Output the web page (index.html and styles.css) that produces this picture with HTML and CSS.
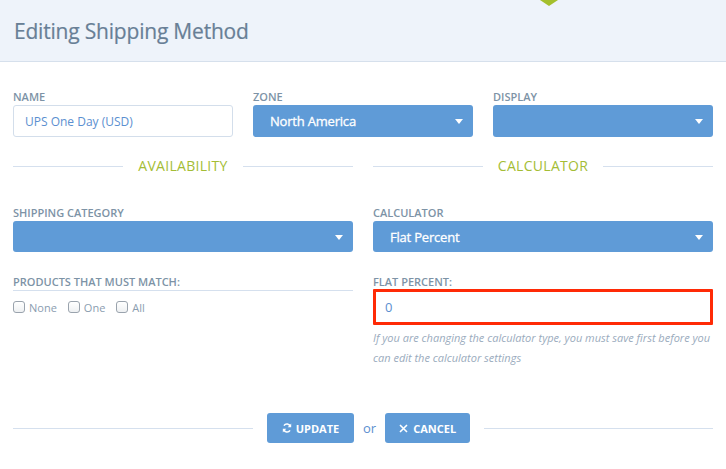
FILE: index.html
```html
<!DOCTYPE html>
<html>
<head>
<meta charset="utf-8">
<link rel="stylesheet" href="styles.css">
</head>
<body>
<div class="page">
  <header class="header">
    <span class="tab-pointer"></span>
    <h1 class="title">Editing Shipping Method</h1>
  </header>
  <main class="content">
    <div class="row3">
      <div class="field">
        <label class="label">Name</label>
        <div class="input">UPS One Day (USD)</div>
      </div>
      <div class="field">
        <label class="label">Zone</label>
        <div class="select">North America<span class="caret"></span></div>
      </div>
      <div class="field">
        <label class="label">Display</label>
        <div class="select"><span class="caret"></span></div>
      </div>
    </div>

    <div class="row2">
      <div class="col">
        <div class="section-title"><span class="rule"></span><span class="section-text">AVAILABILITY</span><span class="rule"></span></div>
        <div class="field mt">
          <label class="label">Shipping Category</label>
          <div class="select sm"><span class="caret"></span></div>
        </div>
        <div class="field mt2">
          <label class="label underlined">Products That Must Match:</label>
          <div class="checks">
            <span class="check"><span class="box"></span>None</span>
            <span class="check"><span class="box"></span>One</span>
            <span class="check"><span class="box"></span>All</span>
          </div>
        </div>
      </div>
      <div class="col">
        <div class="section-title"><span class="rule"></span><span class="section-text">CALCULATOR</span><span class="rule"></span></div>
        <div class="field mt">
          <label class="label">Calculator</label>
          <div class="select sm">Flat Percent<span class="caret"></span></div>
        </div>
        <div class="field mt2">
          <label class="label">Flat Percent:</label>
          <div class="input highlighted">0</div>
          <p class="help">If you are changing the calculator type, you must save first before you can edit the calculator settings</p>
        </div>
      </div>
    </div>

    <div class="actions">
      <span class="line left"></span>
      <button class="btn update">
        <svg class="ico" width="10" height="10" viewBox="0 0 10 10"><path d="M8.3 3.6A3.5 3.5 0 0 0 2 2.6" fill="none" stroke="#fff" stroke-width="1.6"/><path d="M9.2 0.6V4.2H5.7z" fill="#fff"/><path d="M1.7 6.4A3.5 3.5 0 0 0 8 7.4" fill="none" stroke="#fff" stroke-width="1.6"/><path d="M0.8 9.4V5.8H4.3z" fill="#fff"/></svg>
        UPDATE
      </button>
      <span class="or">or</span>
      <button class="btn cancel">
        <svg class="ico" width="9" height="9" viewBox="0 0 9 9"><path d="M1 1L8 8M8 1L1 8" stroke="#fff" stroke-width="1.6"/></svg>
        CANCEL
      </button>
      <span class="line right"></span>
    </div>
  </main>
</div>
</body>
</html>
```
FILE: styles.css
```css
* { box-sizing: border-box; }
html, body { margin: 0; padding: 0; background: #fff; }
body { font-family: "Open Sans", "Liberation Sans", sans-serif; }

.page { width: 726px; height: 469px; overflow: hidden; }

.header {
  position: relative;
  height: 62px;
  background: #eef3fa;
  border-bottom: 1px solid #d6e0ec;
  padding: 0 14px;
  display: flex;
  align-items: center;
}
.tab-pointer {
  position: absolute;
  top: 0;
  left: 540px;
  width: 0;
  height: 0;
  border-left: 9px solid transparent;
  border-right: 9px solid transparent;
  border-top: 6px solid #a4bf2c;
}
.title {
  margin: 0;
  font-size: 21px;
  font-weight: 400;
  color: #687f96;
  letter-spacing: -0.2px;
  -webkit-text-stroke: 0.2px #687f96;
}

.content { padding: 28px 13px 0; }

.row3 { display: grid; grid-template-columns: 220px 220px 220px; column-gap: 20px; }
.row2 { display: grid; grid-template-columns: 340px 340px; column-gap: 20px; margin-top: 19px; }

.field { display: flex; flex-direction: column; }
.mt { margin-top: 30px; }
.mt2 { margin-top: 23px; }

.label {
  font-size: 11px;
  line-height: 14px;
  font-weight: 600;
  text-transform: uppercase;
  color: #7d93a6;
  margin-bottom: 1px;
}
.label.underlined {
  border-bottom: 1px solid #d5e0ee;
  padding-bottom: 1px;
  margin-bottom: 0;
}

.input {
  height: 32px;
  border: 1px solid #d3deeb;
  border-radius: 3px;
  padding: 0 11px;
  display: flex;
  align-items: center;
  font-size: 12px;
  color: #5b8fd0;
}
.input.highlighted {
  margin-top: -1px;
  height: 36px;
  border: 3px solid #ff2a06;
  border-radius: 1px;
  padding: 0 9px;
  font-size: 13px;
}

.select {
  position: relative;
  height: 32px;
  border-radius: 3px;
  background: #5f9bd7;
  color: #fff;
  font-size: 13px;
  font-weight: 400;
  letter-spacing: -0.2px;
  -webkit-text-stroke: 0.3px #fff;
  padding: 0 17px;
  display: flex;
  align-items: center;
}
.select.sm { height: 31px; }
.caret {
  position: absolute;
  right: 10px;
  top: 50%;
  margin-top: -2px;
  width: 0;
  height: 0;
  border-left: 4px solid transparent;
  border-right: 4px solid transparent;
  border-top: 5px solid #fff;
}

.section-title {
  display: flex;
  align-items: center;
  gap: 15px;
  height: 20px;
}
.rule { flex: 1; height: 1px; background: #d5e0ee; }
.section-text {
  font-size: 14px;
  color: #a4bd35;
  letter-spacing: 0.3px;
  line-height: 20px;
}

.checks { display: flex; gap: 11px; margin-top: 8px; height: 16px; align-items: center; }
.check {
  display: flex;
  align-items: center;
  gap: 4px;
  font-size: 11px;
  color: #8b9db0;
}
.box {
  width: 12px;
  height: 12px;
  border: 1px solid #9aa3ad;
  border-radius: 3px;
  background: linear-gradient(#fff, #eef0f2);
}

.help {
  margin: 3px 0 0;
  font-size: 11px;
  line-height: 20px;
  font-style: italic;
  color: #9aabbd;
}

.actions {
  display: flex;
  align-items: center;
  margin-top: 45px;
  height: 30px;
}
.line { height: 1px; background: #d5e0ee; }
.line.left { width: 240px; }
.line.right { flex: 1; }
.btn {
  height: 30px;
  margin: 0 14px;
  border: 0;
  border-radius: 3px;
  background: #5f9bd7;
  color: #fff;
  font-family: inherit;
  font-size: 11px;
  font-weight: 700;
  padding: 0;
  display: flex;
  align-items: center;
  justify-content: center;
  gap: 4px;
}
.btn.update { width: 87px; }
.btn.cancel { width: 85px; gap: 5px; }
.ico { display: block; }
.or { font-size: 13px; color: #5b8fcf; margin: 0 -5px; }
```
